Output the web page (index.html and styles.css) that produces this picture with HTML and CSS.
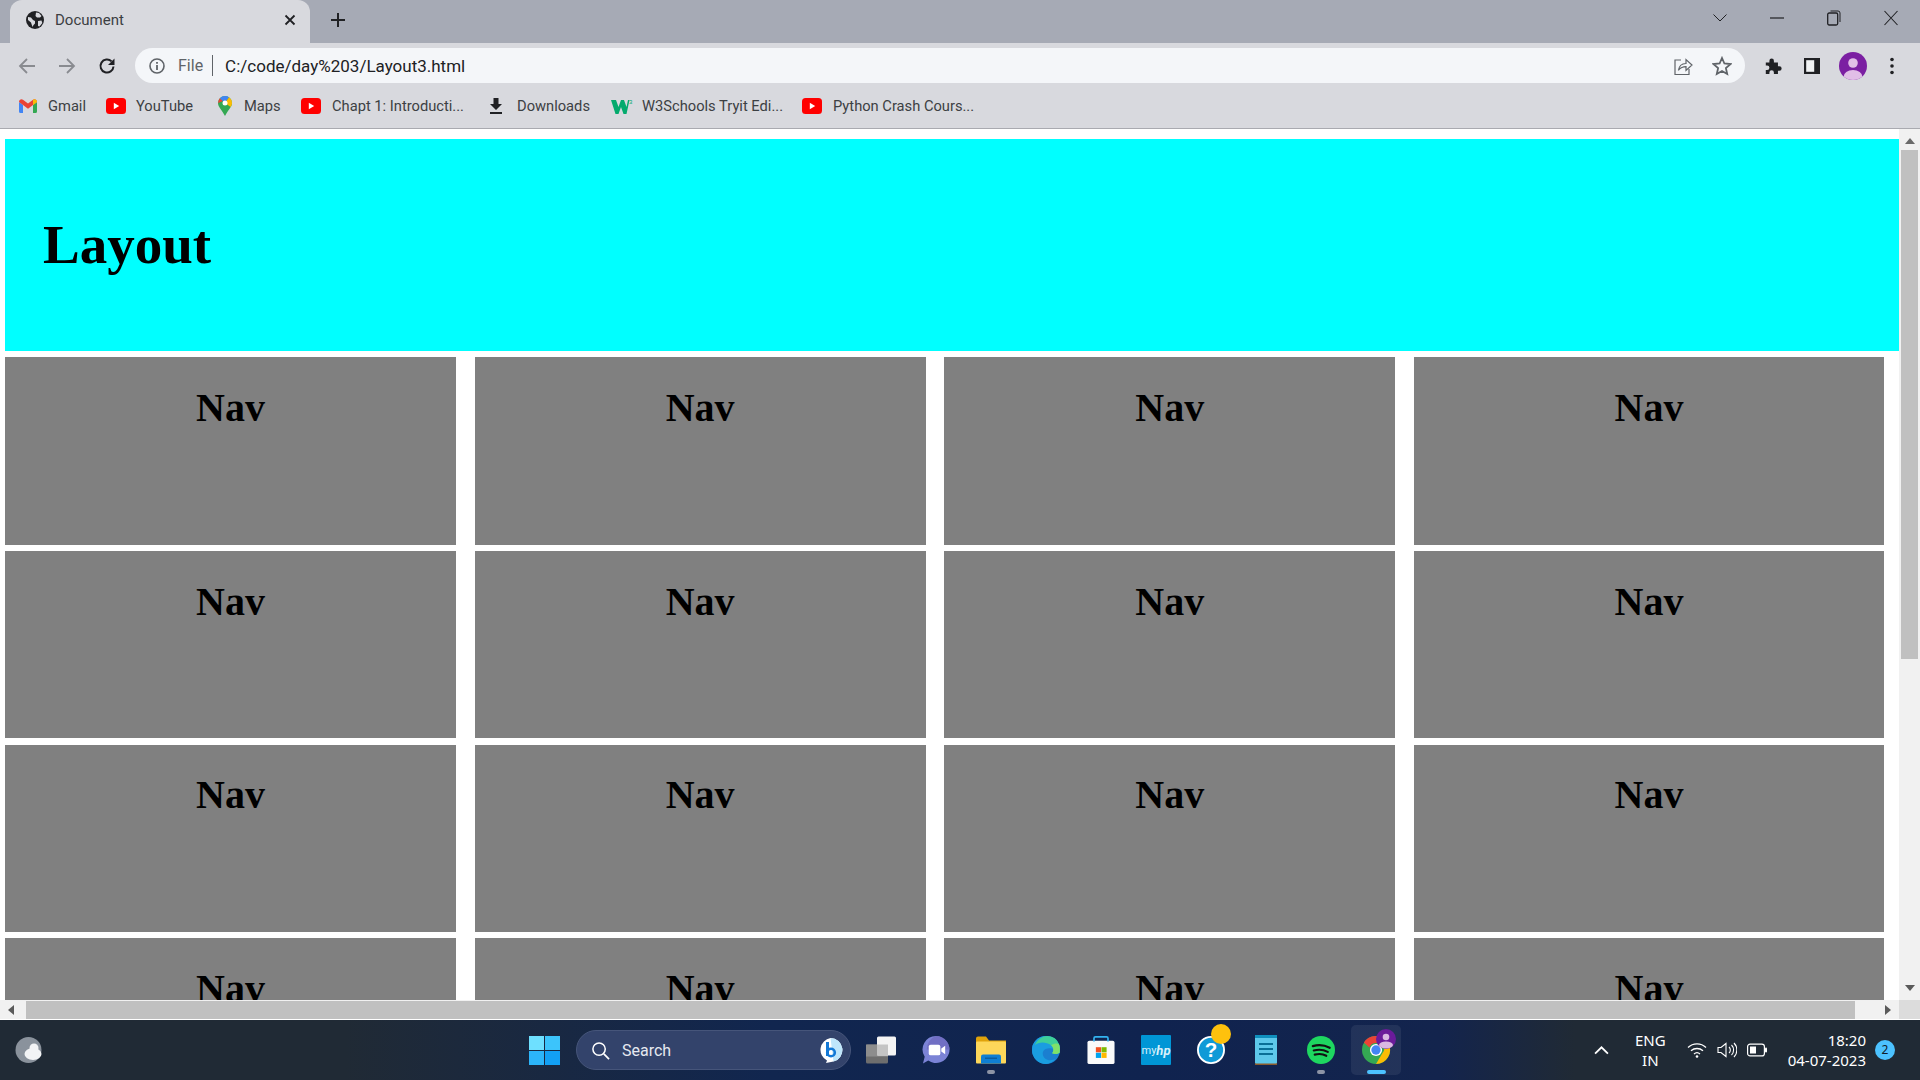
FILE: index.html
```html
<!DOCTYPE html>
<html lang="en">
<head>
<meta charset="utf-8">
<title>Document</title>
<link rel="stylesheet" href="styles.css">
</head>
<body>
<svg class="defs" width="0" height="0" aria-hidden="true">
  <symbol id="yt" viewBox="0 0 20 16"><rect width="20" height="16" rx="3.5" fill="#f00"/><path d="M7.8 4.8l5.4 3.2-5.4 3.2z" fill="#fff"/></symbol>
</svg>

<div class="tabstrip">
  <div class="tab">
    <svg class="tab-globe" viewBox="0 0 18 18"><circle cx="9" cy="9" r="9" fill="#202124"/><path d="M2 6l3 .5 2 2.500 2 1v2.500l-1.500 1.500L6.500 16 5 11.500 2 9zM10 1.500l3 .5 2.500 3-1.500 1.500H11L9.500 5zM12 10l3.500-.5.800 2.500-2.800 3.500-1.500-.5z" fill="#d8d9de"/></svg>
    <span class="tab-title">Document</span>
    <svg class="tab-close" viewBox="0 0 12 12"><path d="M1.500 1.500l9 9m0-9l-9 9" stroke="#202124" stroke-width="1.800"/></svg>
  </div>
  <svg class="new-tab" viewBox="0 0 16 16"><path d="M8 1v14M1 8h14" stroke="#202124" stroke-width="2"/></svg>
  <div class="win-controls">
    <svg class="win-btn chevron" viewBox="0 0 14 8"><path d="M.5.500L7 7 13.500.500" fill="none" stroke="#202124"/></svg>
    <svg class="win-btn minimize" viewBox="0 0 14 2"><path d="M0 1h14" stroke="#202124" stroke-width="1.200"/></svg>
    <svg class="win-btn maximize" viewBox="0 0 14 16"><path d="M.7 4.500a1.500 1.500 0 0 1 1.500-1.500h7a1.500 1.500 0 0 1 1.500 1.500v9a1.500 1.500 0 0 1-1.500 1.500h-7a1.500 1.500 0 0 1-1.500-1.500z" fill="none" stroke="#202124" stroke-width="1.300"/><path d="M3.500 1h7.500a2 2 0 0 1 2 2v9" fill="none" stroke="#202124"/></svg>
    <svg class="win-btn close" viewBox="0 0 14 16"><path d="M.5 1l13 14m0-14L.5 15" stroke="#202124" stroke-width="1.100"/></svg>
  </div>
</div>

<div class="toolbar">
  <div class="nav-btns">
    <svg class="tool-icon" viewBox="0 0 18 18"><path d="M17 9H2.500M9 2L2 9l7 7" fill="none" stroke="#898b90" stroke-width="1.800"/></svg>
    <svg class="tool-icon" viewBox="0 0 18 18"><path d="M1 9h14.500M9 2l7 7-7 7" fill="none" stroke="#898b90" stroke-width="1.800"/></svg>
    <svg class="tool-icon" viewBox="0 0 18 18"><path d="M15.500 9.500A6.500 6.500 0 1 1 13.600 4.400" fill="none" stroke="#202124" stroke-width="2"/><path d="M16.500 1.500v6.500H10z" fill="#202124"/></svg>
  </div>
  <div class="omnibox">
    <svg class="info-icon" viewBox="0 0 16 16"><circle cx="8" cy="8" r="7" fill="none" stroke="#5f6368" stroke-width="1.600"/><path d="M8 7v5M8 4v1.800" stroke="#5f6368" stroke-width="1.800"/></svg>
    <span class="scheme">File</span>
    <span class="url-divider"></span>
    <span class="url">C:/code/day%203/Layout3.html</span>
    <svg class="omni-icon share" viewBox="0 0 20 20"><path d="M8 4H2v14.500h14V13M2 18.500h14" fill="none" stroke="#5f6368" stroke-width="1.200"/><path d="M5.500 14.500c.5-4.500 3.500-7 7.500-7V3.500l6 5.500-6 5.500v-3.800c-3 0-5.500 1-7.500 3.300z" fill="none" stroke="#5f6368" stroke-width="1.200"/></svg>
    <svg class="omni-icon star" viewBox="0 0 20 20"><path d="M10 2l2.400 5.500 6 .6-4.500 4 1.300 5.900L10 15l-5.200 3 1.300-5.900-4.500-4 6-.6z" fill="none" stroke="#5f6368" stroke-width="1.800"/></svg>
  </div>
  <div class="toolbar-right">
    <svg class="tool-icon" viewBox="0 0 20 20"><path d="M2 6h4V4.200a2.500 2.500 0 0 1 5 0V6h4.500v4.200h1.600a2.500 2.500 0 0 1 0 5h-1.600V19H11v-1.800a2.500 2.500 0 0 0-5 0V19H2v-4.500h1.500a2.500 2.500 0 0 0 0-5H2z" fill="#202124"/></svg>
    <svg class="tool-icon panel" viewBox="0 0 18 18"><rect x="1" y="1" width="16" height="16" fill="#202124"/><rect x="3.200" y="3.200" width="8" height="11.600" fill="#f1f3f4"/></svg>
    <svg class="avatar" viewBox="0 0 28 28"><defs><clipPath id="avatar-clip"><circle cx="14" cy="14" r="14"/></clipPath></defs><circle cx="14" cy="14" r="14" fill="#7b1fa2"/><g clip-path="url(#avatar-clip)"><circle cx="14" cy="11" r="4.800" fill="#e1bee7"/><ellipse cx="14" cy="25" rx="9.500" ry="7" fill="#e1bee7"/></g></svg>
    <svg class="tool-icon menu" viewBox="0 0 18 18"><circle cx="9" cy="2.500" r="1.800" fill="#202124"/><circle cx="9" cy="9" r="1.800" fill="#202124"/><circle cx="9" cy="15.500" r="1.800" fill="#202124"/></svg>
  </div>
</div>

<div class="bookmarks">
  <div class="bm bm-gmail">
    <svg class="bm-icon" viewBox="0 0 18 14"><path d="M0 3v9.500A1.500 1.500 0 0 0 1.500 14H4V6z" fill="#4285f4"/><path d="M14 6v8h2.500a1.500 1.500 0 0 0 1.500-1.500V3z" fill="#34a853"/><path d="M0 3l4 3 5 3.700L14 6l4-3c0-2.500-2.500-3.500-4-2.200L9 4.600 4 .8C2.500-.5 0 .5 0 3z" fill="#ea4335"/><path d="M14 6V.8c1.500-1.300 4-.3 4 2.200z" fill="#fbbc04"/></svg>
    <span>Gmail</span>
  </div>
  <div class="bm bm-yt"><svg class="bm-icon"><use href="#yt"/></svg><span>YouTube</span></div>
  <div class="bm bm-maps">
    <svg class="bm-icon" viewBox="0 0 14 20"><path d="M7 0a7 7 0 0 1 7 7c0 4-4 7-7 13-3-6-7-9-7-13a7 7 0 0 1 7-7z" fill="#34a853"/><path d="M1.900 2.200L5 5 0 7a7 7 0 0 1 1.900-4.800z" fill="#ea4335"/><path d="M1.900 2.200A7 7 0 0 1 7 0a7 7 0 0 1 4 1.300L7 7z" fill="#4285f4"/><path d="M11 1.300A7 7 0 0 1 14 7c0 1.500-.5 2.800-1.300 4L7 7z" fill="#fbbc04"/><circle cx="7" cy="7" r="2.500" fill="#fff"/></svg>
    <span>Maps</span>
  </div>
  <div class="bm bm-chapt"><svg class="bm-icon"><use href="#yt"/></svg><span>Chapt 1: Introducti...</span></div>
  <div class="bm bm-dl">
    <svg class="bm-icon" viewBox="0 0 12 16"><path d="M3.500 0h5v6H12L6 12 0 6h3.500zM0 14h12v2H0z" fill="#202124"/></svg>
    <span>Downloads</span>
  </div>
  <div class="bm bm-w3">
    <svg class="bm-icon" viewBox="0 0 22 16"><path d="M0 2h5l2.500 7L10 2h3l2.500 7L17 2h1.500l-3 14h-3L10 9l-2.500 7h-3z" fill="#04aa6d"/><text x="18" y="6" class="w3-sup">3</text></svg>
    <span>W3Schools Tryit Edi...</span>
  </div>
  <div class="bm bm-py"><svg class="bm-icon"><use href="#yt"/></svg><span>Python Crash Cours...</span></div>
</div>

<main class="viewport">
  <div class="page">
    <header class="hero"><h1>Layout</h1></header>
    <section class="nav-grid">
      <div class="cell"><h2>Nav</h2></div>
      <div class="cell"><h2>Nav</h2></div>
      <div class="cell"><h2>Nav</h2></div>
      <div class="cell"><h2>Nav</h2></div>
      <div class="cell"><h2>Nav</h2></div>
      <div class="cell"><h2>Nav</h2></div>
      <div class="cell"><h2>Nav</h2></div>
      <div class="cell"><h2>Nav</h2></div>
      <div class="cell"><h2>Nav</h2></div>
      <div class="cell"><h2>Nav</h2></div>
      <div class="cell"><h2>Nav</h2></div>
      <div class="cell"><h2>Nav</h2></div>
      <div class="cell"><h2>Nav</h2></div>
      <div class="cell"><h2>Nav</h2></div>
      <div class="cell"><h2>Nav</h2></div>
      <div class="cell"><h2>Nav</h2></div>
    </section>
  </div>
  <div class="vscroll">
    <span class="arrow-up"></span>
    <span class="vthumb"></span>
    <span class="arrow-down"></span>
  </div>
  <div class="hscroll">
    <span class="arrow-left"></span>
    <span class="hthumb"></span>
    <span class="arrow-right"></span>
  </div>
  <div class="corner"></div>
</main>

<footer class="taskbar">
  <svg class="weather" viewBox="0 0 29 26"><ellipse cx="14.500" cy="13" rx="13" ry="13" fill="#8a929c"/><ellipse cx="19" cy="17" rx="8.500" ry="6" fill="#f2f3f5"/><circle cx="20" cy="11" r="4.500" fill="#f2f3f5"/></svg>
  <div class="task-slot start">
    <svg class="start-logo" viewBox="0 0 31 29"><rect width="15" height="14" fill="#6ee0ff"/><rect x="16" width="15" height="14" fill="#3cc4fb"/><rect y="15" width="15" height="14" fill="#2cb5fa"/><rect x="16" y="15" width="15" height="14" fill="#12a0f5"/></svg>
  </div>
  <div class="searchbox">
    <svg class="search-glass" viewBox="0 0 20 20"><circle cx="8.500" cy="8.500" r="6.500" fill="none" stroke="#fff" stroke-width="1.600"/><path d="M13.500 13.500L19 19" stroke="#fff" stroke-width="1.800"/></svg>
    <span class="search-label">Search</span>
    <svg class="bing" viewBox="0 0 25 25"><path d="M12.500 0a12 12 0 0 1 3 23.600L8 25l1-2.500A12 12 0 0 1 12.500 0z" fill="#fff"/><path d="M12.500 0a12 12 0 0 1 3 23.600z" fill="#bfe6fb"/><path d="M9.500 4v14" stroke="#1479d6" stroke-width="3"/><circle cx="13" cy="14.500" r="3.800" fill="none" stroke="#1479d6" stroke-width="2.600"/></svg>
  </div>
  <div class="task-icons">
    <div class="task-slot">
      <svg class="ti" viewBox="0 0 30 27"><rect y="8" width="22" height="19" rx="1.500" fill="#6e6e6e"/><rect y="8" width="22" height="12" fill="#8d8d8d"/><rect x="11" width="19" height="19" rx="1.500" fill="#f4f4f4"/><rect x="11" y="8" width="11" height="11" fill="#c4c4c4"/></svg>
    </div>
    <div class="task-slot">
      <svg class="ti" viewBox="0 0 29 29"><path d="M14.500 0a14 14 0 1 1-8 25.500L1 28.500l1.800-7A14 14 0 0 1 14.500 0z" fill="#7b83d6"/><path d="M14.500 0a14 14 0 0 1 14 14H5A14 14 0 0 1 14.500 0z" fill="#6a62b8" opacity=".6"/><rect x="7" y="9" width="12" height="11" rx="2" fill="#fff"/><path d="M20 13l4-3v9l-4-3z" fill="#fff"/></svg>
    </div>
    <div class="task-slot">
      <svg class="ti" viewBox="0 0 30 27"><path d="M0 2a2 2 0 0 1 2-2h8l3 4h17v6H0z" fill="#e0a30b"/><rect y="5" width="30" height="22" rx="1" fill="#fdd75a"/><path d="M5 27v-7a2 2 0 0 1 2-2h16a2 2 0 0 1 2 2v7z" fill="#0f7fd3"/><rect x="9" y="21" width="12" height="1.500" fill="#0b5ea1"/></svg>
      <span class="dot"></span>
    </div>
    <div class="task-slot">
      <svg class="ti" viewBox="0 0 30 30"><circle cx="15" cy="15" r="15" fill="#1b7fd0"/><path d="M0 15A15 15 0 0 1 30 15c0 1-.2 2.500-.5 3-2-2-6-5-11-5-5 0-7 3-7 6 0 4 4 7 8 7 2 0 5-.5 6-1.500C23 27.500 19 30 15 30A15 15 0 0 1 0 15z" fill="#1a9de0"/><path d="M3 10C6 3 12 0 16 0c6 0 11 3 13 9 1 3 1 6 .5 9-2.500 2-6 1.500-8 .5 2-2 2-6-1-8.500C15 6 7 6 3 10z" fill="#3ecf9a"/><path d="M29 9c1 3 1 6 .5 9-2.500 2-6 1.500-8 .5 2-2 2-6-1-8.500 4-3 7-2 9-1z" fill="#7fe06a"/></svg>
    </div>
    <div class="task-slot">
      <svg class="ti" viewBox="0 0 29 30"><rect y="5" width="29" height="25" rx="2" fill="#fafafa"/><path d="M7 6V2.500A1.500 1.500 0 0 1 8.500 1h12A1.500 1.500 0 0 1 22 2.500V6" fill="none" stroke="#33b3f0" stroke-width="1.800"/><rect x="9" y="12" width="5.500" height="5.500" fill="#f25022"/><rect x="15" y="12" width="5.500" height="5.500" fill="#7fba00"/><rect x="9" y="18" width="5.500" height="5.500" fill="#00a4ef"/><rect x="15" y="18" width="5.500" height="5.500" fill="#ffb900"/></svg>
    </div>
    <div class="task-slot">
      <div class="myhp"><span class="my">my</span><span class="hp">hp</span></div>
    </div>
    <div class="task-slot">
      <svg class="ti" viewBox="0 0 30 30"><circle cx="15" cy="15" r="14" fill="#109ad7" stroke="#fff" stroke-width="2"/><text x="15" y="23" class="help-q">?</text></svg>
      <span class="help-badge"></span>
    </div>
    <div class="task-slot">
      <svg class="ti ti-note" viewBox="0 0 22 30"><rect y="2" width="22" height="28" fill="#8b5a2b"/><rect y="2" width="22" height="26.500" rx="1" fill="#5ec8ea"/><rect y="0" width="22" height="3" fill="#0f8fbd"/><path d="M4 9h14M4 14h14M4 19h14" stroke="#0a6f96" stroke-width="2"/></svg>
    </div>
    <div class="task-slot">
      <svg class="ti" viewBox="0 0 29 29"><circle cx="14.500" cy="14.500" r="14.500" fill="#1ed760"/><path d="M6 10.500c6-1.700 12-1.200 17.500 1.700M7 15c5-1.400 10-1 14.500 1.500M8 19.300c4.500-1.100 8.500-.8 12 1.200" fill="none" stroke="#111" stroke-width="2.200" stroke-linecap="round"/></svg>
      <span class="dot"></span>
    </div>
    <div class="task-slot active">
      <svg class="ti" viewBox="0 0 30 30"><circle cx="15" cy="15" r="15" fill="#34a853"/><path d="M15 0a15 15 0 0 1 13 7.500H15a7.500 7.500 0 0 0-7 4.800L2 7A15 15 0 0 1 15 0z" fill="#ea4335"/><path d="M28 7.500A15 15 0 0 1 15 30l6.500-11A7.500 7.500 0 0 0 21 7.500z" fill="#fbbc04"/><circle cx="15" cy="15" r="6.500" fill="#fff"/><circle cx="15" cy="15" r="5" fill="#4285f4"/></svg>
      <svg class="chrome-badge" viewBox="0 0 20 20"><circle cx="10" cy="10" r="10" fill="#6a1b9a"/><circle cx="10" cy="8" r="3.300" fill="#d9b8e3"/><ellipse cx="10" cy="16" rx="7" ry="3.500" fill="#d9b8e3"/></svg>
      <span class="dot wide"></span>
    </div>
  </div>
  <div class="tray">
    <svg class="tray-chevron" viewBox="0 0 14 8"><path d="M1 7l6-6 6 6" fill="none" stroke="#fff" stroke-width="1.700"/></svg>
    <div class="lang"><span>ENG</span><span>IN</span></div>
    <div class="tray-icons">
      <svg class="tray-i" viewBox="0 0 20 16"><path d="M1 5.500a13 13 0 0 1 18 0M4 8.800a9 9 0 0 1 12 0M7 12a4.500 4.500 0 0 1 6 0" fill="none" stroke="#fff" stroke-width="1.300"/><circle cx="10" cy="14.500" r="1.300" fill="#fff"/></svg>
      <svg class="tray-i" viewBox="0 0 20 16"><path d="M1 5.500h3L9 1.500v13l-5-4H1z" fill="none" stroke="#fff" stroke-width="1.100"/><path d="M12 5a4 4 0 0 1 0 6M14.500 3a7 7 0 0 1 0 10M17 1a10 10 0 0 1 0 14" fill="none" stroke="#fff" stroke-width="1.100"/></svg>
      <svg class="tray-i" viewBox="0 0 20 13"><rect x=".6" y=".6" width="16.800" height="11.800" rx="2.500" fill="none" stroke="#fff" stroke-width="1.200"/><rect x="3" y="3" width="6" height="7" fill="#fff"/><rect x="18" y="4" width="2" height="5" rx="1" fill="#fff"/></svg>
    </div>
    <div class="clock"><span>18:20</span><span>04-07-2023</span></div>
    <span class="notif">2</span>
  </div>
</footer>
</body>
</html>
```
FILE: styles.css
```css
* { box-sizing: border-box; }
html, body { margin: 0; padding: 0; }
body {
  width: 1920px;
  height: 1080px;
  overflow: hidden;
  display: flex;
  flex-direction: column;
  font-family: Roboto, "Noto Sans", sans-serif;
  color: #202124;
  background: #fff;
}
.defs { position: absolute; }

/* tab strip */
.tabstrip {
  height: 43px;
  flex: none;
  background: #a6aab5;
  display: flex;
  align-items: center;
  padding-left: 10px;
}
.tab {
  width: 300px;
  height: 43px;
  background: #d8d9de;
  border-radius: 12px 12px 0 0;
  display: flex;
  align-items: center;
  padding: 0 14px 3px 16px;
}
.tab-globe { width: 18px; height: 18px; margin-right: 11px; }
.tab-title { flex: 1; font-size: 15px; color: #3c4043; }
.tab-close { width: 12px; height: 12px; }
.new-tab { width: 16px; height: 16px; margin: -3px 0 0 20px; }
.win-controls {
  margin-left: auto;
  display: flex;
  align-items: center;
  height: 36px;
  margin-top: -7px;
  padding-right: 22px;
  gap: 43px;
}
.win-btn { display: block; }
.chevron { width: 14px; height: 8px; }
.minimize { width: 14px; height: 2px; }
.maximize { width: 14px; height: 16px; }
.close { width: 14px; height: 16px; }

/* toolbar */
.toolbar {
  height: 47px;
  flex: none;
  background: #d8d9de;
  display: flex;
  align-items: flex-start;
  padding: 5px 19px 0 18px;
}
.nav-btns { display: flex; gap: 22px; align-items: center; height: 35px; }
.tool-icon { width: 18px; height: 18px; display: block; flex: none; }
.omnibox {
  flex: 1;
  height: 35px;
  margin-left: 19px;
  background: #f4f6f9;
  border-radius: 18px;
  display: flex;
  align-items: center;
  padding: 0 12.5px 0 14px;
}
.info-icon { width: 16px; height: 16px; margin-right: 13px; }
.scheme { font-size: 16px; color: #5f6368; }
.url-divider { width: 1px; height: 21px; background: #5f6368; margin: 0 12px 0 9px; }
.url { font-size: 17px; color: #202124; flex: 1; }
.omni-icon { width: 20px; height: 20px; }
.share { margin-right: 19px; }
.toolbar-right {
  display: flex;
  align-items: center;
  height: 35px;
  margin-left: 19.5px;
}
.panel { margin-left: 21px; }
.avatar { width: 28px; height: 28px; margin-left: 18px; flex: none; }
.menu { margin-left: 16px; }

/* bookmarks */
.bookmarks {
  height: 39px;
  flex: none;
  background: #d8d9de;
  border-bottom: 1px solid #a9aab0;
  display: flex;
  align-items: flex-start;
  padding-left: 19px;
}
.bm {
  height: 32px;
  display: flex;
  align-items: center;
  font-size: 14.7px;
  color: #3c4043;
  white-space: nowrap;
}
.bm-icon { display: block; margin-right: 11px; }
.bm-gmail { width: 87px; }
.bm-gmail .bm-icon { width: 18px; height: 14px; }
.bm-yt { width: 112px; }
.bm-yt .bm-icon { margin-right: 10px; }
.bm-yt .bm-icon, .bm-chapt .bm-icon, .bm-py .bm-icon { width: 20px; height: 16px; }
.bm-maps { width: 83px; }
.bm-maps .bm-icon { width: 14px; height: 20px; margin-right: 12px; }
.bm-chapt { width: 189px; }
.bm-dl { width: 121px; }
.bm-dl .bm-icon { width: 12px; height: 16px; margin-right: 15px; }
.bm-w3 { width: 191px; }
.bm-w3 .bm-icon { width: 22px; height: 16px; margin-right: 9px; }
.w3-sup { font-size: 6px; fill: #04aa6d; font-family: "Liberation Sans", sans-serif; }
.bm-py { width: 180px; }

/* browser page */
.viewport {
  flex: none;
  height: 891px;
  display: grid;
  grid-template-columns: 1899px 21px;
  grid-template-rows: 871px 20px;
  background: #fff;
}
.page {
  overflow: hidden;
  padding: 10px 0 0 5px;
  font-family: "Liberation Serif", "Times New Roman", serif;
  color: #000;
}
.hero {
  height: 212px;
  background: #0ff;
  display: flex;
  align-items: center;
  padding: 0 0 2px 38px;
}
.hero h1 { margin: 0; font-size: 55px; font-weight: 700; }
.nav-grid {
  margin-top: 6.3px;
  display: grid;
  grid-template-columns: 451px 451px 451px 470px;
  grid-auto-rows: 187.4px;
  column-gap: 18.67px;
  row-gap: 6.27px;
}
.cell {
  background: #808080;
  text-align: center;
  padding-top: 26.7px;
}
.cell h2 { margin: 0; font-size: 40px; font-weight: 700; }

/* scrollbars */
.vscroll {
  background: #f1f1f1;
  display: flex;
  flex-direction: column;
  align-items: center;
  padding-top: 9px;
}
.arrow-up {
  width: 0; height: 0;
  border: 5px solid transparent;
  border-top: 0;
  border-bottom: 6px solid #6a6a6a;
}
.vthumb { width: 17px; height: 509px; background: #c0c0c0; margin-top: 6px; flex: none; }
.arrow-down {
  width: 0; height: 0;
  margin-top: 326px;
  border: 5px solid transparent;
  border-bottom: 0;
  border-top: 6px solid #5a5a5a;
}
.hscroll {
  background: #f1f1f1;
  border-bottom: 1px solid #fff;
  display: flex;
  align-items: flex-end;
  padding-left: 8px;
}
.arrow-left {
  width: 0; height: 0;
  margin-bottom: 4px;
  border: 5px solid transparent;
  border-left: 0;
  border-right: 6px solid #5a5a5a;
}
.hthumb { width: 1829px; height: 18px; background: #c0c0c0; margin-left: 12px; }
.arrow-right {
  width: 0; height: 0;
  margin: 0 0 4px 30px;
  border: 5px solid transparent;
  border-right: 0;
  border-left: 6px solid #5a5a5a;
}
.corner { background: #dcdcdc; border-bottom: 1px solid #fff; }

/* taskbar */
.taskbar {
  flex: 1;
  display: flex;
  align-items: center;
  background: linear-gradient(90deg, #202a35 0%, #202a35 18%, #11264f 40%, #10234f 60%, #13244d 75%, #202a35 82%, #202a35 100%);
  color: #fff;
}
.weather { width: 29px; height: 26px; margin-left: 14px; margin-right: 476px; flex: none; }
.task-slot {
  width: 50px;
  height: 50px;
  flex: none;
  position: relative;
  display: flex;
  align-items: center;
  justify-content: center;
  border-radius: 5px;
}
.start { margin-right: 7px; }
.start-logo { width: 31px; height: 29px; }
.searchbox {
  width: 275px;
  height: 40px;
  flex: none;
  background: #33436b;
  border: 1px solid #46557a;
  border-radius: 20px;
  display: flex;
  align-items: center;
  padding: 0 7px 0 14px;
  margin-right: 5px;
}
.search-glass { width: 19px; height: 19px; margin-right: 12px; }
.search-label { flex: 1; font-size: 16px; color: #e6e9f0; }
.bing { width: 25px; height: 25px; }
.task-icons { display: flex; gap: 5px; }
.ti { width: 30px; height: 28px; display: block; }
.ti-note { width: 22px; height: 30px; }
.dot {
  position: absolute;
  left: 50%;
  bottom: 1px;
  width: 8px;
  height: 4px;
  margin-left: -4px;
  border-radius: 2px;
  background: #8d94a6;
}
.dot.wide { width: 19px; margin-left: -9.500px; background: #4cc2ff; }
.active { background: rgba(255,255,255,.07); }
.myhp {
  width: 30px;
  height: 30px;
  background: #0096d6;
  display: flex;
  align-items: center;
  justify-content: center;
  border-radius: 1px;
  font-size: 11px;
  color: #d8f0fa;
}
.hp { font-style: italic; font-weight: 700; font-size: 13px; }
.help-q { font: 700 22px "Liberation Sans", sans-serif; fill: #fff; text-anchor: middle; }
.help-badge {
  position: absolute;
  left: 25px;
  top: -1px;
  width: 20px;
  height: 20px;
  border-radius: 50%;
  background: #fec10d;
}
.chrome-badge { position: absolute; left: 25px; top: 4px; width: 20px; height: 20px; }

/* tray */
.tray {
  margin-left: auto;
  display: flex;
  align-items: center;
  padding-right: 25px;
  font-family: "Noto Sans", Roboto, sans-serif;
}
.tray-chevron { width: 15px; height: 9px; margin-right: 26px; }
.lang {
  display: flex;
  flex-direction: column;
  align-items: center;
  font-size: 15px;
  line-height: 20px;
  margin-right: 21px;
}
.tray-icons { display: flex; gap: 10px; align-items: center; margin-right: 21px; }
.tray-i { width: 20px; height: 16px; display: block; }
.clock {
  display: flex;
  flex-direction: column;
  align-items: flex-end;
  font-size: 15px;
  line-height: 20px;
  margin-right: 9px;
}
.notif {
  width: 20px;
  height: 20px;
  border-radius: 50%;
  background: #4cc2ff;
  color: #10202c;
  font-size: 12px;
  line-height: 20px;
  text-align: center;
}
```
